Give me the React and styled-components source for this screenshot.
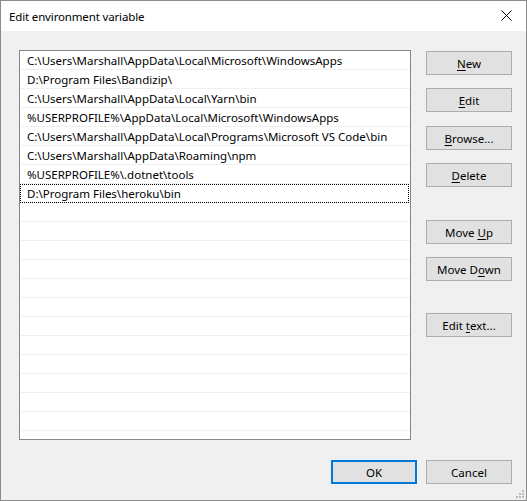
import React from 'react'
import styled, { createGlobalStyle } from 'styled-components'

const GlobalStyle = createGlobalStyle`
    html, body {
        margin: 0;
        padding: 0;
        background: #f0f0f0;
    }
    * {
        box-sizing: border-box;
    }
`;

const Window = styled.div`
    width: 527px;
    height: 501px;
    border: 1px solid #8c8c8c;
    background: #f0f0f0;
    display: flex;
    flex-direction: column;
    font-family: "Noto Sans", "DejaVu Sans", sans-serif;
    font-size: 11.5px;
    color: #000;
    position: relative;
`;

const TitleBar = styled.div`
    height: 30px;
    background: #fff;
    display: flex;
    align-items: center;
    justify-content: space-between;
    padding: 0 14px 0 8px;
    flex-shrink: 0;
`;

const Title = styled.span`
    font-size: 11.5px;
    letter-spacing: -0.15px;
    padding-top: 1px;
`;

const CloseButton = styled.span`
    display: flex;
    align-items: center;
    justify-content: center;
    width: 12px;
    height: 12px;
    margin-top: -1px;
`;

const Body = styled.div`
    flex: 1;
    display: flex;
    flex-direction: column;
    padding: 19px 14px 0 18px;
`;

const TopRow = styled.div`
    display: flex;
    gap: 15px;
`;

const ListBox = styled.div`
    width: 392px;
    height: 390px;
    border: 1px solid #828790;
    background: #fff;
    overflow: hidden;
`;

const Row = styled.div`
    height: 19px;
    border-bottom: 1px solid #f0f0f0;
    padding: 1px 0 0 7px;
    display: flex;
    align-items: center;
    white-space: nowrap;
    outline: ${p => (p.$focused ? '1px dotted #000' : 'none')};
    outline-offset: -1px;
    margin-right: ${p => (p.$focused ? '1px' : '0')};
`;

const ButtonColumn = styled.div`
    display: flex;
    flex-direction: column;
    padding-top: 1px;
`;

const Button = styled.button`
    width: 86px;
    height: 24px;
    margin-top: ${p => p.$gap || 0}px;
    border: ${p => (p.$default ? '2px solid #0078d7' : '1px solid #adadad')};
    background: #e1e1e1;
    font-family: inherit;
    font-size: 11.5px;
    color: #000;
    padding: 0;
    display: flex;
    align-items: center;
    justify-content: center;
    u {
        text-decoration-thickness: 1px;
        text-underline-offset: 2px;
    }
`;

const Footer = styled.div`
    display: flex;
    justify-content: flex-end;
    gap: 9px;
    margin-top: 20px;
`;

const SizeGrip = styled.svg`
    position: absolute;
    right: 1px;
    bottom: 1px;
`;

const paths = [
    'C:\\Users\\Marshall\\AppData\\Local\\Microsoft\\WindowsApps',
    'D:\\Program Files\\Bandizip\\',
    'C:\\Users\\Marshall\\AppData\\Local\\Yarn\\bin',
    '%USERPROFILE%\\AppData\\Local\\Microsoft\\WindowsApps',
    'C:\\Users\\Marshall\\AppData\\Local\\Programs\\Microsoft VS Code\\bin',
    'C:\\Users\\Marshall\\AppData\\Roaming\\npm',
    '%USERPROFILE%\\.dotnet\\tools',
    'D:\\Program Files\\heroku\\bin',
];

const rows = [...paths, ...Array(13).fill('')];

const App = () => {
    return (
        <>
            <GlobalStyle />
            <Window>
                <TitleBar>
                    <Title>Edit environment variable</Title>
                    <CloseButton>
                        <svg width="11" height="11" viewBox="0 0 11 11">
                            <path d="M0.5 0.5 L10.5 10.5 M10.5 0.5 L0.5 10.5" stroke="#000" strokeWidth="1" />
                        </svg>
                    </CloseButton>
                </TitleBar>
                <Body>
                    <TopRow>
                        <ListBox>
                            {rows.map((p, i) => (
                                <Row key={i} $focused={i === 7}>{p}</Row>
                            ))}
                        </ListBox>
                        <ButtonColumn>
                            <Button><span><u>N</u>ew</span></Button>
                            <Button $gap={13}><span><u>E</u>dit</span></Button>
                            <Button $gap={14}><span><u>B</u>rowse...</span></Button>
                            <Button $gap={13}><span><u>D</u>elete</span></Button>
                            <Button $gap={33}><span>Move <u>U</u>p</span></Button>
                            <Button $gap={13}><span>Move D<u>o</u>wn</span></Button>
                            <Button $gap={32}><span>Edit <u>t</u>ext...</span></Button>
                        </ButtonColumn>
                    </TopRow>
                    <Footer>
                        <Button $default>OK</Button>
                        <Button>Cancel</Button>
                    </Footer>
                </Body>
                <SizeGrip width="12" height="12" viewBox="0 0 12 12">
                    {[[9, 3], [9, 6], [6, 6], [9, 9], [6, 9], [3, 9]].map(([x, y], i) => (
                        <rect key={i} x={x} y={y} width="2" height="2" fill="#bcbcbc" />
                    ))}
                </SizeGrip>
            </Window>
        </>
    )
}

export default App
